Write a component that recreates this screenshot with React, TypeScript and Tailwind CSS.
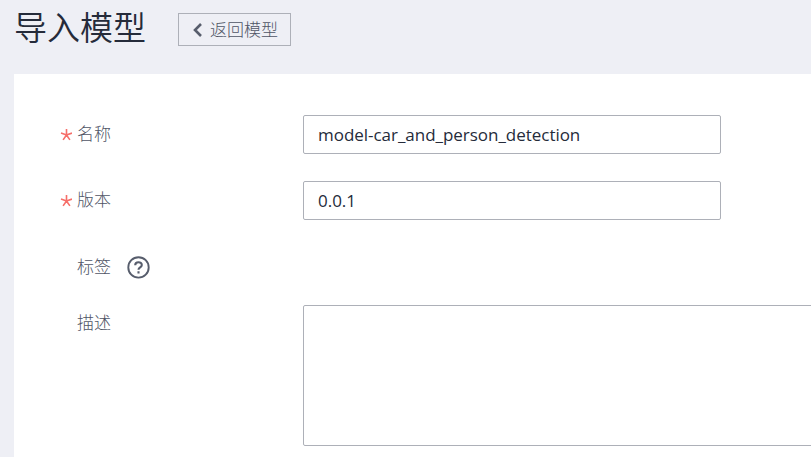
import React from "react";

function Label({ children, required = false }: { children: React.ReactNode; required?: boolean }) {
  return (
    <div className={`flex w-[243px] shrink-0 items-center text-[17px] font-light leading-[24px] text-[#4f5566] ${required ? "mb-[1px]" : ""}`}>
      <span className="flex w-[17px] shrink-0 items-center">
        {required && (
          <svg width="12" height="12" viewBox="0 0 12 12" className="mt-px" fill="none" stroke="#f66f6a" strokeWidth="1.6">
            <path d="M6.5 0v6M6.5 6L1 4.1M6.5 6L12 4.1M6.5 6l-3.4 4.9M6.5 6l3.4 4.9" />
          </svg>
        )}
      </span>
      {children}
    </div>
  );
}

function TextField({ value }: { value: string }) {
  return (
    <input
      className="h-[39px] w-[418px] rounded-[2px] border border-[#adb0b8] px-[14px] font-['Open_Sans','Noto_Sans_CJK_SC',sans-serif] text-[17px] tracking-[-0.03px] text-[#252b3a]"
      defaultValue={value}
    />
  );
}

export default function App() {
  return (
    <div className="h-[457px] w-[811px] overflow-hidden bg-[#eeeff5] font-['Noto_Sans','Noto_Sans_CJK_SC',sans-serif]">
      <header className="flex h-[74px] items-start pl-[14px]">
        <h1 className="mt-[2px] w-[164px] font-['Noto_Sans_CJK_SC',sans-serif] text-[33px] font-[350] leading-[48px] text-[#252b3a]">导入模型</h1>
        <button className="mt-[13px] flex h-[33px] w-[113px] items-center border border-[#adb0b8] pl-[14px] text-[17px] font-light leading-[24px] text-[#4f5566]">
          <svg width="9" height="14" viewBox="0 0 9 14" fill="none" stroke="#575d6c" strokeWidth="2.6" className="mr-[8px]">
            <path d="M8 1L2 7l6 6" />
          </svg>
          返回模型
        </button>
      </header>
      <main className="ml-[14px] h-[383px] bg-white pl-[46px] pt-[41px]">
        <div className="flex h-[39px] items-center">
          <Label required>名称</Label>
          <TextField value="model-car_and_person_detection" />
        </div>
        <div className="mt-[27px] flex h-[39px] items-center">
          <Label required>版本</Label>
          <TextField value="0.0.1" />
        </div>
        <div className="mt-[35px] flex h-[24px] items-center">
          <Label>
            标签
            <svg width="24" height="24" viewBox="0 0 24 24" fill="none" stroke="#575d6c" strokeWidth="1.9" className="ml-[16px]">
              <circle cx="11.5" cy="12.4" r="10.2" />
              <path strokeWidth="2.1" d="M8.2 10.3c0-4 6.6-4 6.6-.4 0 2.4-3.3 2.4-3.3 4.8M11.5 16.3v2.2" />
            </svg>
          </Label>
        </div>
        <div className="mt-[26px] flex items-start">
          <Label><span className="mt-[6px]">描述</span></Label>
          <textarea className="h-[141px] w-[560px] shrink-0 resize-none rounded-[2px] border border-[#adb0b8]" />
        </div>
      </main>
    </div>
  );
}
